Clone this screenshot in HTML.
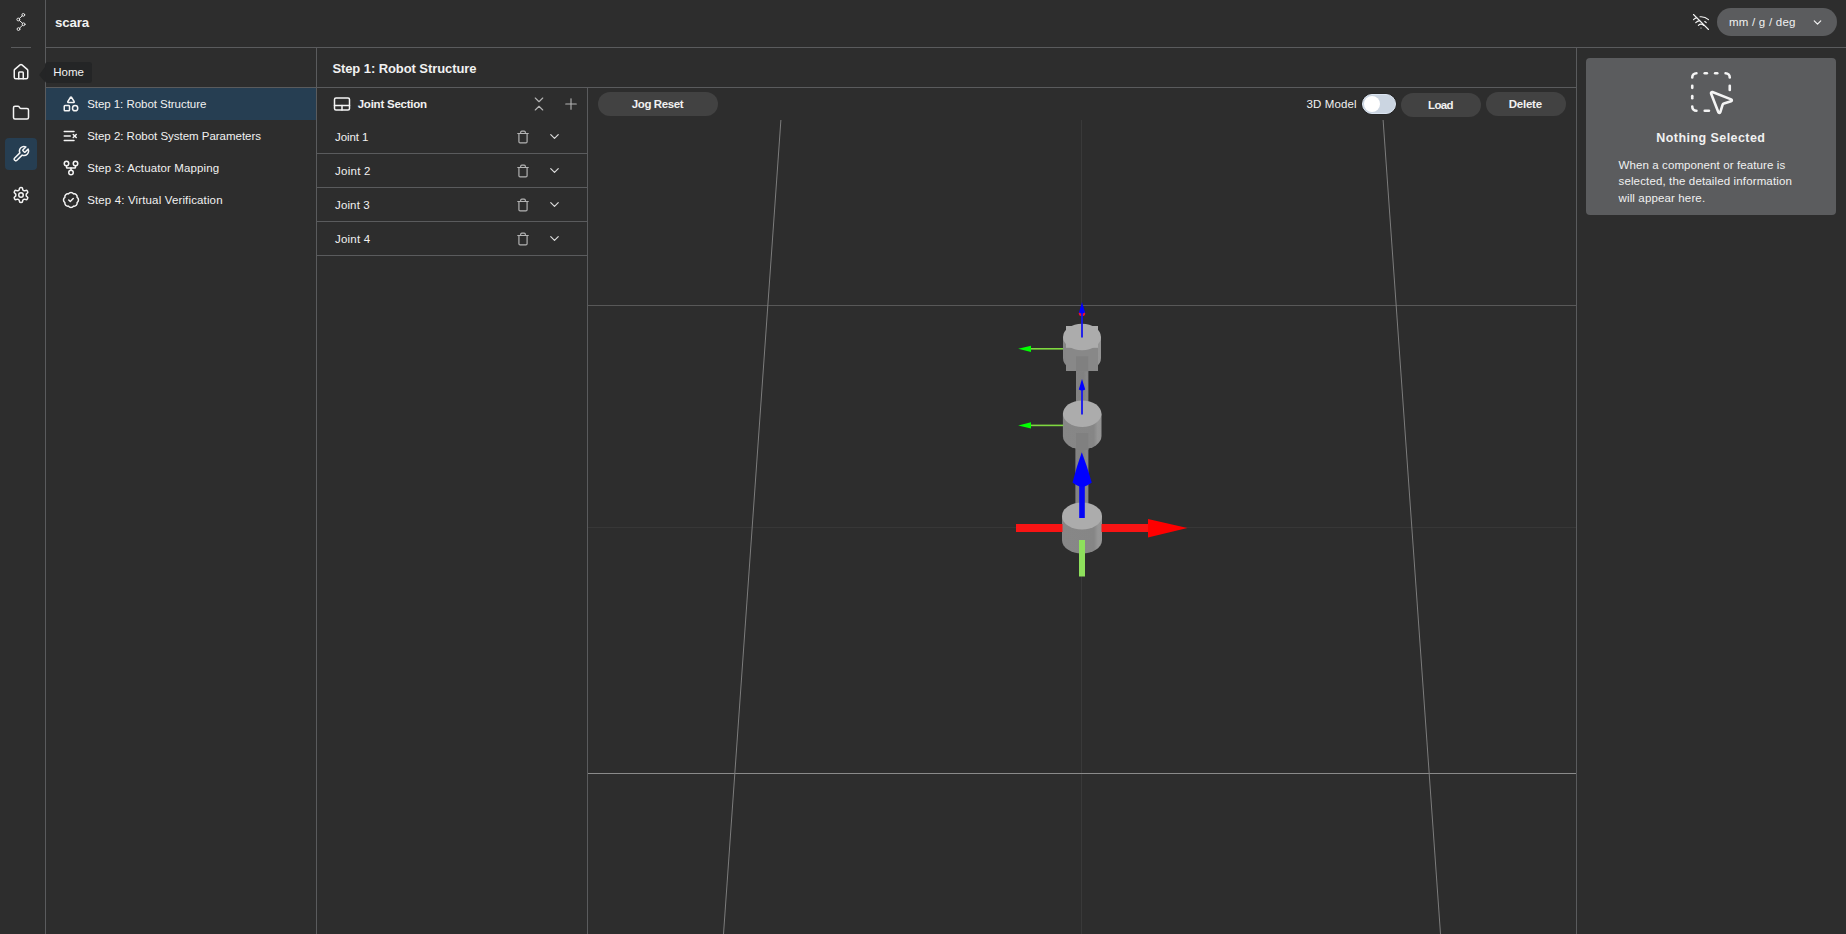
<!DOCTYPE html>
<html><head><meta charset="utf-8">
<style>
*{box-sizing:border-box;margin:0;padding:0}
html,body{width:1846px;height:934px;overflow:hidden;background:#2d2d2d;font-family:"Liberation Sans",sans-serif;color:#f1f1f1;font-size:12px}
.abs{position:absolute}
.ln{position:absolute;background:#5a5b5d}
svg.ic{position:absolute;fill:none;stroke:#f4f4f4;stroke-width:2;stroke-linecap:round;stroke-linejoin:round}
svg.g{stroke:#b4b4b4}
.t{position:absolute;white-space:nowrap;line-height:1}
.b{font-weight:bold}
.pill{position:absolute;background:#424242;border-radius:12px;height:24px;text-align:center;font-weight:bold;font-size:12px;line-height:24px;color:#f4f4f4}
</style></head><body>
<!-- structural borders -->
<div class="ln" style="left:45px;top:0;width:1px;height:934px"></div>
<div class="ln" style="left:46px;top:47px;width:1800px;height:1px"></div>
<div class="ln" style="left:11px;top:47px;width:20px;height:1px"></div>
<div class="ln" style="left:316px;top:48px;width:1px;height:886px"></div>
<div class="ln" style="left:46px;top:87px;width:1531px;height:1px"></div>
<div class="ln" style="left:587px;top:88px;width:1px;height:846px"></div>
<div class="ln" style="left:1576px;top:48px;width:1px;height:886px"></div>

<!-- header -->

<!-- RAIL -->
<div class="abs" style="left:5px;top:138px;width:32px;height:32px;border-radius:4px;background:#263e52"></div>

<!-- logo -->
<svg class="ic" style="left:6px;top:6px;stroke-width:0.95;stroke:#ececec" width="30" height="32" viewBox="0 0 30 32"><circle cx="17.3" cy="8.9" r="1.4"/><circle cx="12.3" cy="13.5" r="1.4"/><circle cx="17.6" cy="18.3" r="1.4"/><circle cx="12.5" cy="23.1" r="1.4"/><path d="M16.27 9.85L13.33 12.55M13.34 14.44L16.56 17.36M16.58 19.26L13.52 22.14"/></svg>
<!-- home -->
<svg class="ic" style="left:12px;top:63px" width="18" height="18" viewBox="0 0 24 24"><path d="M15 21v-8a1 1 0 0 0-1-1h-4a1 1 0 0 0-1 1v8"/><path d="M3 10a2 2 0 0 1 .709-1.528l7-5.999a2 2 0 0 1 2.582 0l7 5.999A2 2 0 0 1 21 10v9a2 2 0 0 1-2 2H5a2 2 0 0 1-2-2z"/></svg>
<!-- folder -->
<svg class="ic" style="left:12px;top:104px" width="18" height="18" viewBox="0 0 24 24"><path d="M20 20a2 2 0 0 0 2-2V8a2 2 0 0 0-2-2h-7.9a2 2 0 0 1-1.69-.9L9.6 3.9A2 2 0 0 0 7.93 3H4a2 2 0 0 0-2 2v13a2 2 0 0 0 2 2Z"/></svg>
<!-- wrench -->
<svg class="ic" style="left:12px;top:145px" width="18" height="18" viewBox="0 0 24 24"><path d="M14.7 6.3a1 1 0 0 0 0 1.4l1.6 1.6a1 1 0 0 0 1.4 0l3.77-3.77a6 6 0 0 1-7.94 7.94l-6.91 6.91a2.12 2.12 0 0 1-3-3l6.91-6.91a6 6 0 0 1 7.94-7.94l-3.76 3.76z"/></svg>
<!-- settings -->
<svg class="ic" style="left:12px;top:186px" width="18" height="18" viewBox="0 0 24 24"><path d="M12.22 2h-.44a2 2 0 0 0-2 2v.18a2 2 0 0 1-1 1.73l-.43.25a2 2 0 0 1-2 0l-.15-.08a2 2 0 0 0-2.73.73l-.22.38a2 2 0 0 0 .73 2.73l.15.1a2 2 0 0 1 1 1.72v.51a2 2 0 0 1-1 1.74l-.15.09a2 2 0 0 0-.73 2.73l.22.38a2 2 0 0 0 2.73.73l.15-.08a2 2 0 0 1 2 0l.43.25a2 2 0 0 1 1 1.73V20a2 2 0 0 0 2 2h.44a2 2 0 0 0 2-2v-.18a2 2 0 0 1 1-1.73l.43-.25a2 2 0 0 1 2 0l.15.08a2 2 0 0 0 2.73-.73l.22-.39a2 2 0 0 0-.73-2.73l-.15-.08a2 2 0 0 1-1-1.74v-.5a2 2 0 0 1 1-1.74l.15-.09a2 2 0 0 0 .73-2.73l-.22-.38a2 2 0 0 0-2.73-.73l-.15.08a2 2 0 0 1-2 0l-.43-.25a2 2 0 0 1-1-1.73V4a2 2 0 0 0-2-2z"/><circle cx="12" cy="12" r="3"/></svg>
<!-- NAV -->
<div class="abs" style="left:46px;top:88px;width:270px;height:32px;background:#263e52"></div>

<svg class="ic" style="left:62px;top:95px" width="18" height="18" viewBox="0 0 24 24"><path d="M8.3 10a.7.7 0 0 1-.626-1.079L11.4 3a.7.7 0 0 1 1.198-.043L16.3 8.9a.7.7 0 0 1-.572 1.1Z"/><rect x="3" y="14" width="7" height="7" rx="1"/><circle cx="17.5" cy="17.5" r="3.5"/></svg>
<svg class="ic" style="left:62px;top:127px" width="18" height="18" viewBox="0 0 24 24"><path d="M11 12H3"/><path d="M16 6H3"/><path d="M16 18H3"/><path d="m19 10-4 4"/><path d="m15 10 4 4"/></svg>
<svg class="ic" style="left:62px;top:159px" width="18" height="18" viewBox="0 0 24 24"><circle cx="12" cy="18" r="3"/><circle cx="6" cy="6" r="3"/><circle cx="18" cy="6" r="3"/><path d="M18 9v2c0 .6-.4 1-1 1H7c-.6 0-1-.4-1-1V9"/><path d="M12 12v3"/></svg>
<svg class="ic" style="left:62px;top:191px" width="18" height="18" viewBox="0 0 24 24"><path d="M3.85 8.62a4 4 0 0 1 4.78-4.77 4 4 0 0 1 6.74 0 4 4 0 0 1 4.78 4.78 4 4 0 0 1 0 6.74 4 4 0 0 1-4.77 4.78 4 4 0 0 1-6.75 0 4 4 0 0 1-4.78-4.77 4 4 0 0 1 0-6.76Z"/><path d="m9 12 2 2 4-4"/></svg>
<!-- tooltip -->
<div class="abs" style="left:45px;top:62.4px;width:46.8px;height:20.2px;background:#242526;border-radius:3px"></div>
<svg class="abs" style="left:36px;top:60px" width="12" height="26" viewBox="36 60 12 26"><path d="M45.5 66.2 L39.1 75 L45.5 82.6 Z" fill="#242526"/></svg>

<!-- STEP TITLE -->

<!-- JOINT PANEL -->
<div class="ln" style="left:317px;top:153px;width:270px;height:1px"></div>
<div class="ln" style="left:317px;top:187px;width:270px;height:1px"></div>
<div class="ln" style="left:317px;top:221px;width:270px;height:1px"></div>
<div class="ln" style="left:317px;top:255px;width:270px;height:1px"></div>

<!-- joint icons -->
<svg class="ic" style="left:333px;top:95px" width="18" height="18" viewBox="0 0 24 24"><rect width="20" height="16" x="2" y="4" rx="2"/><path d="M2 14h20"/><path d="M12 20v-6"/></svg>
<svg class="ic g" style="left:530px;top:95px;stroke-width:1.5" width="18" height="18" viewBox="0 0 24 24"><path d="m7 20 5-5 5 5"/><path d="m7 4 5 5 5-5"/></svg>
<svg class="ic g" style="left:562px;top:95px;stroke-width:1.5" width="18" height="18" viewBox="0 0 24 24"><path d="M5 12h14"/><path d="M12 5v14"/></svg>
<svg class="ic g" style="left:516px;top:130px" width="14" height="14" viewBox="0 0 24 24"><path d="M3 6h18"/><path d="M19 6v14c0 1-1 2-2 2H7c-1 0-2-1-2-2V6"/><path d="M8 6V4c0-1 1-2 2-2h4c1 0 2 1 2 2v2"/></svg>
<svg class="ic" style="left:547.1px;top:129.0px;stroke-width:1.9;stroke:#dcdcdc" width="15" height="15" viewBox="0 0 24 24"><path d="m6 9 6 6 6-6"/></svg>
<svg class="ic g" style="left:516px;top:164px" width="14" height="14" viewBox="0 0 24 24"><path d="M3 6h18"/><path d="M19 6v14c0 1-1 2-2 2H7c-1 0-2-1-2-2V6"/><path d="M8 6V4c0-1 1-2 2-2h4c1 0 2 1 2 2v2"/></svg>
<svg class="ic" style="left:547.1px;top:163.0px;stroke-width:1.9;stroke:#dcdcdc" width="15" height="15" viewBox="0 0 24 24"><path d="m6 9 6 6 6-6"/></svg>
<svg class="ic g" style="left:516px;top:198px" width="14" height="14" viewBox="0 0 24 24"><path d="M3 6h18"/><path d="M19 6v14c0 1-1 2-2 2H7c-1 0-2-1-2-2V6"/><path d="M8 6V4c0-1 1-2 2-2h4c1 0 2 1 2 2v2"/></svg>
<svg class="ic" style="left:547.1px;top:197.0px;stroke-width:1.9;stroke:#dcdcdc" width="15" height="15" viewBox="0 0 24 24"><path d="m6 9 6 6 6-6"/></svg>
<svg class="ic g" style="left:516px;top:232px" width="14" height="14" viewBox="0 0 24 24"><path d="M3 6h18"/><path d="M19 6v14c0 1-1 2-2 2H7c-1 0-2-1-2-2V6"/><path d="M8 6V4c0-1 1-2 2-2h4c1 0 2 1 2 2v2"/></svg>
<svg class="ic" style="left:547.1px;top:231.0px;stroke-width:1.9;stroke:#dcdcdc" width="15" height="15" viewBox="0 0 24 24"><path d="m6 9 6 6 6-6"/></svg>
<!-- VIEWPORT TOOLBAR -->
<div class="pill" style="left:598px;top:92px;width:120px"></div>
<div class="abs" style="left:1362px;top:93.7px;width:34px;height:20.5px;border-radius:10.25px;background:#cbd5e1;border:1px solid #dbe4f0;box-shadow:0 0 0 0.6px #222"></div>
<div class="abs" style="left:1364px;top:96px;width:16px;height:16px;border-radius:8px;background:#fff"></div>
<div class="pill" style="left:1401px;top:93px;width:80px"></div>
<div class="pill" style="left:1486px;top:92px;width:80px"></div>

<!-- RIGHT CARD -->
<div class="abs" style="left:1586px;top:58px;width:250px;height:156.5px;border-radius:4px;background:#5b5c5e"></div>

<svg class="ic" style="left:1686px;top:67px;stroke-width:1.25" width="50" height="50" viewBox="0 0 24 24"><path d="M12.034 12.681a.498.498 0 0 1 .647-.647l9 3.5a.5.5 0 0 1-.033.943l-3.444 1.068a1 1 0 0 0-.66.66l-1.067 3.443a.5.5 0 0 1-.943.033z"/><path d="M5 3a2 2 0 0 0-2 2"/><path d="M19 3a2 2 0 0 1 2 2"/><path d="M5 21a2 2 0 0 1-2-2"/><path d="M9 3h1"/><path d="M9 21h2"/><path d="M14 3h1"/><path d="M3 9v1"/><path d="M21 9v2"/><path d="M3 14v1"/></svg>
<!-- UNIT SELECT -->
<div class="abs" style="left:1717px;top:8px;width:120px;height:28px;border-radius:14px;background:#5b5c5e"></div>

<svg class="ic" style="left:1692px;top:13px;stroke-width:1.5" width="18" height="18" viewBox="0 0 24 24"><path d="M12 20h.01"/><path d="M8.5 16.429a5 5 0 0 1 7 0"/><path d="M5 12.859a10 10 0 0 1 5.17-2.69"/><path d="M19 12.859a10 10 0 0 0-2.007-1.523"/><path d="M2 8.82a15 15 0 0 1 4.177-2.643"/><path d="M22 8.82a15 15 0 0 0-11.288-3.764"/><path d="m2 2 20 20"/></svg>
<svg class="ic" style="left:1811px;top:16px;stroke-width:2.2" width="13" height="13" viewBox="0 0 24 24"><path d="m6 9 6 6 6-6"/></svg>
<!-- TEXT-BEGIN -->
<div class="t b" id="scara" style="left:54.99px;top:15.94px;font-size:13.3px;letter-spacing:-0.177px">scara</div>
<div class="t" id="home" style="left:53.20px;top:67.27px;font-size:11.5px;letter-spacing:0.037px">Home</div>
<div class="t" id="s1" style="left:87.15px;top:99.27px;font-size:11.5px;letter-spacing:-0.045px">Step 1: Robot Structure</div>
<div class="t" id="s2" style="left:87.15px;top:131.27px;font-size:11.5px;letter-spacing:-0.020px">Step 2: Robot System Parameters</div>
<div class="t" id="s3" style="left:87.15px;top:163.27px;font-size:11.5px;letter-spacing:0.126px">Step 3: Actuator Mapping</div>
<div class="t" id="s4" style="left:87.15px;top:195.27px;font-size:11.5px;letter-spacing:0.146px">Step 4: Virtual Verification</div>
<div class="t b" id="title" style="left:332.40px;top:62.00px;font-size:13px;letter-spacing:-0.082px">Step 1: Robot Structure</div>
<div class="t b" id="jsec" style="left:357.70px;top:99.27px;font-size:11.5px;letter-spacing:-0.233px">Joint Section</div>
<div class="t" id="j1" style="left:335.00px;top:132.27px;font-size:11.5px;letter-spacing:-0.100px">Joint 1</div>
<div class="t" id="j2" style="left:335.00px;top:166.27px;font-size:11.5px;letter-spacing:0.267px">Joint 2</div>
<div class="t" id="j3" style="left:335.00px;top:200.27px;font-size:11.5px;letter-spacing:0.133px">Joint 3</div>
<div class="t" id="j4" style="left:335.00px;top:234.27px;font-size:11.5px;letter-spacing:0.200px">Joint 4</div>
<div class="t b" id="jog" style="left:631.80px;top:99.27px;font-size:11.5px;letter-spacing:-0.400px">Jog Reset</div>
<div class="t" id="m3d" style="left:1306.40px;top:99.27px;font-size:11.5px;letter-spacing:0.143px">3D Model</div>
<div class="t b" id="load" style="left:1428.00px;top:100.27px;font-size:11.5px;letter-spacing:-0.633px">Load</div>
<div class="t b" id="del" style="left:1508.70px;top:99.27px;font-size:11.5px;letter-spacing:-0.220px">Delete</div>
<div class="t" id="unit" style="left:1728.90px;top:17.27px;font-size:11.5px;letter-spacing:0.245px">mm / g / deg</div>
<div class="t b" id="noth" style="left:1656.30px;top:132.42px;font-size:12.5px;letter-spacing:0.440px">Nothing Selected</div>
<div class="t" id="d1" style="left:1618.50px;top:160.37px;font-size:11.5px;letter-spacing:0.103px">When a component or feature is</div>
<div class="t" id="d2" style="left:1618.50px;top:175.77px;font-size:11.5px;letter-spacing:0.139px">selected, the detailed information</div>
<div class="t" id="d3" style="left:1618.50px;top:193.37px;font-size:11.5px;letter-spacing:0.137px">will appear here.</div>
<!-- TEXT-END -->
<!-- SCENE -->
<svg id="scene" class="abs" style="left:588px;top:120px" width="988" height="814" viewBox="588 120 988 814">
<defs>
<linearGradient id="cyl" x1="0" x2="1" y1="0" y2="0"><stop offset="0" stop-color="#878787"/><stop offset="0.8" stop-color="#868686"/><stop offset="0.9" stop-color="#969696"/><stop offset="1" stop-color="#949494"/></linearGradient>
<linearGradient id="rod" x1="0" x2="1" y1="0" y2="0"><stop offset="0" stop-color="#838383"/><stop offset="0.6" stop-color="#818181"/><stop offset="0.85" stop-color="#888"/><stop offset="1" stop-color="#838383"/></linearGradient>
</defs>
<!-- grid -->
<g shape-rendering="crispEdges">
<rect x="1081" y="120" width="1" height="814" fill="#393939"/>
<rect x="588" y="527" width="988" height="1" fill="#373737"/>
<rect x="588" y="305" width="988" height="1" fill="#585858"/>
<rect x="588" y="773" width="988" height="1" fill="#8a8a8a"/>
</g>
<line x1="780.9" y1="120" x2="723.5" y2="934" stroke="#7c7c7c" stroke-width="1"/>
<line x1="1383.1" y1="120" x2="1440.5" y2="934" stroke="#7c7c7c" stroke-width="1"/>
<!-- rods -->
<rect x="1075.4" y="440" width="13" height="70" fill="url(#rod)"/>
<rect x="1076" y="360" width="12.4" height="50" fill="url(#rod)"/>
<!-- joint 1 -->
<path d="M1062 516 V540 A20 13.5 0 0 0 1102 540 V516 Z" fill="url(#cyl)"/>
<ellipse cx="1082" cy="516" rx="20" ry="13.5" fill="#acacac"/>
<!-- joint 2 -->
<path d="M1062.9 413.7 V436 A19.3 13.3 0 0 0 1101.5 436 V413.7 Z" fill="url(#cyl)"/>
<rect x="1076" y="433" width="12.3" height="17" fill="#808080"/>
<ellipse cx="1082.2" cy="413.7" rx="19.3" ry="13.2" fill="#acacac"/>
<!-- joint 3 -->
<path d="M1063 337 V358 A19 13.4 0 0 0 1101 358 V337 Z" fill="url(#cyl)"/>
<rect x="1066" y="345" width="32" height="26" fill="#888"/>
<rect x="1076" y="356.2" width="12.3" height="15" fill="#808080"/>
<ellipse cx="1082" cy="337" rx="19" ry="13.2" fill="#acacac"/>
<rect x="1066" y="326" width="32" height="21.8" fill="#acacac"/>
<!-- axes joint1 -->
<rect x="1016" y="524" width="46.5" height="8" fill="#f81414"/>
<rect x="1101.5" y="524" width="47" height="8" fill="#f81414"/>
<path d="M1148 519 L1187.4 528 L1148 537.5 Z" fill="#ff0000"/>
<rect x="1079.2" y="484" width="5.6" height="34" fill="#0505f5"/>
<path d="M1081.8 452.2 Q1087.4 467 1091.8 482.5 Q1082 490.8 1072.5 482.5 Q1076.4 467 1081.8 452.2 Z" fill="#0000ff"/>
<rect x="1079" y="540" width="6" height="36.5" fill="#8ee05c"/>
<!-- axes joint2 -->
<rect x="1081.1" y="388" width="1.8" height="26.5" fill="#1414ee"/>
<path d="M1082 379 L1085.2 389.5 Q1082 391.5 1078.8 389.5 Z" fill="#0000ff"/>
<rect x="1030" y="424.6" width="33.2" height="1.6" fill="#7fd840"/>
<path d="M1018.2 425.4 L1031 422.3 L1031 428.5 Z" fill="#00ff00"/>
<!-- axes joint3 -->
<ellipse cx="1082" cy="313.5" rx="3.2" ry="2.6" fill="#ee1030"/>
<rect x="1081.1" y="311" width="1.8" height="26.5" fill="#1414ee"/>
<path d="M1082 302 L1085 312.5 Q1082 314.5 1079 312.5 Z" fill="#0000ff"/>
<rect x="1030" y="348" width="33" height="1.6" fill="#7fd840"/>
<path d="M1018.2 348.8 L1031 345.7 L1031 351.9 Z" fill="#00ff00"/>
</svg>
</body></html>
